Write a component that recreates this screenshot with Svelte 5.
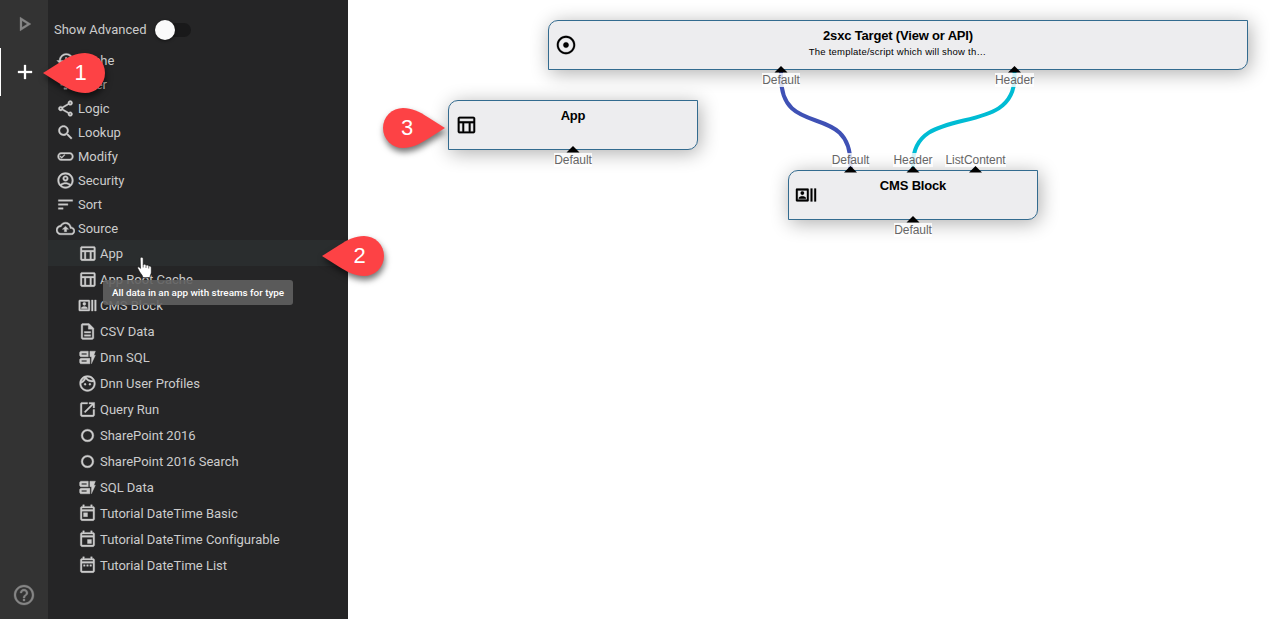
<script>
  const icons = {
    play: 'M10 8.64L15.27 12 10 15.36V8.64M8 5v14l11-7L8 5z',
    add: 'M19 13h-6v6h-2v-6H5v-2h6V5h2v6h6v2z',
    help: 'M11 18h2v-2h-2v2zm1-16C6.48 2 2 6.48 2 12s4.48 10 10 10 10-4.48 10-10S17.52 2 12 2zm0 18c-4.41 0-8-3.59-8-8s3.59-8 8-8 8 3.59 8 8-3.59 8-8 8zm0-14c-2.21 0-4 1.79-4 4h2c0-1.1.9-2 2-2s2 .9 2 2c0 2-3 1.75-3 5h2c0-2.25 3-2.5 3-5 0-2.21-1.79-4-4-4z',
    history: 'M13 3c-4.97 0-9 4.03-9 9H1l3.89 3.89.07.14L9 12H6c0-3.87 3.13-7 7-7s7 3.13 7 7-3.13 7-7 7c-1.93 0-3.68-.79-4.94-2.06l-1.42 1.42C8.27 19.99 10.51 21 13 21c4.97 0 9-4.03 9-9s-4.03-9-9-9zm-1 5v5l4.28 2.54.72-1.21-3.5-2.08V8H12z',
    filter: 'M10 18h4v-2h-4v2zM3 6v2h18V6H3zm3 7h12v-2H6v2z',
    share: 'M18 16.08c-.76 0-1.44.3-1.96.77L8.91 12.7c.05-.23.09-.46.09-.7s-.04-.47-.09-.7l7.05-4.11c.54.5 1.25.81 2.04.81 1.66 0 3-1.34 3-3s-1.34-3-3-3-3 1.34-3 3c0 .24.04.47.09.7L8.04 9.81C7.5 9.31 6.79 9 6 9c-1.66 0-3 1.34-3 3s1.34 3 3 3c.79 0 1.5-.31 2.04-.81l7.12 4.16c-.05.21-.08.43-.08.65 0 1.61 1.31 2.92 2.92 2.92s2.92-1.31 2.92-2.92-1.31-2.92-2.92-2.92zM18 4c.55 0 1 .45 1 1s-.45 1-1 1-1-.45-1-1 .45-1 1-1zM6 13c-.55 0-1-.45-1-1s.45-1 1-1 1 .45 1 1-.45 1-1 1zm12 7.02c-.55 0-1-.45-1-1s.45-1 1-1 1 .45 1 1-.45 1-1 1z',
    search: 'M15.5 14h-.79l-.28-.27C15.41 12.59 16 11.11 16 9.5 16 5.91 13.09 3 9.5 3S3 5.91 3 9.5 5.91 16 9.5 16c1.61 0 3.09-.59 4.23-1.57l.27.28v.79l5 4.99L20.49 19l-4.99-5zm-6 0C7.01 14 5 11.99 5 9.5S7.01 5 9.5 5 14 7.01 14 9.5 11.99 14 9.5 14z',
    modify: 'M17.5 7h-11C3.9 7 2 9.24 2 12s1.9 5 4.5 5h11c2.6 0 4.5-2.24 4.5-5s-1.9-5-4.5-5zm0 8.2h-11C5 15.2 3.9 13.8 3.9 12S5 8.8 6.5 8.8h11c1.5 0 2.6 1.4 2.6 3.2s-1.1 3.2-2.6 3.2zM7.24 14.46l-2.57-2.57.9-.9 1.67 1.67 3.3-3.3.9.9z',
    account: 'M12 2C6.48 2 2 6.48 2 12s4.48 10 10 10 10-4.48 10-10S17.52 2 12 2zM7.07 18.28c.43-.9 3.05-1.78 4.93-1.78s4.51.88 4.93 1.78C15.57 19.36 13.86 20 12 20s-3.57-.64-4.93-1.72zm11.29-1.45c-1.43-1.74-4.9-2.33-6.36-2.33s-4.93.59-6.36 2.33C4.62 15.49 4 13.82 4 12c0-4.41 3.59-8 8-8s8 3.59 8 8c0 1.82-.62 3.49-1.64 4.83zM12 6c-1.94 0-3.5 1.56-3.5 3.5S10.06 13 12 13s3.5-1.56 3.5-3.5S13.94 6 12 6zm0 5c-.83 0-1.5-.67-1.5-1.5S11.17 8 12 8s1.5.67 1.5 1.5S12.83 11 12 11z',
    sort: 'M3 18h6v-2H3v2zM3 6v2h18V6H3zm0 7h12v-2H3v2z',
    cloud: 'M19.35 10.04C18.67 6.59 15.64 4 12 4 9.11 4 6.6 5.64 5.35 8.04 2.34 8.36 0 10.91 0 14c0 3.31 2.69 6 6 6h13c2.76 0 5-2.24 5-5 0-2.64-2.05-4.78-4.65-4.96zM19 18H6c-2.21 0-4-1.79-4-4 0-2.05 1.53-3.76 3.56-3.97l1.07-.11.5-.95C8.08 7.14 9.94 6 12 6c2.62 0 4.88 1.86 5.39 4.43l.3 1.5 1.53.11c1.56.1 2.78 1.41 2.78 2.96 0 1.65-1.35 3-3 3zM8 13h2.55v3h2.9v-3H16l-4-4z',
    table: 'M20 3H5c-1.1 0-2 .9-2 2v14c0 1.1.9 2 2 2h15c1.1 0 2-.9 2-2V5c0-1.1-.9-2-2-2zm0 2v3H5V5h15zm-5 14h-5v-9h5v9zM5 10h3v9H5v-9zm12 9v-9h3v9h-3z',
    actors: 'M21 5h2v14h-2zM17 5h2v14h-2zM14 5H2c-.55 0-1 .45-1 1v12c0 .55.45 1 1 1h12c.55 0 1-.45 1-1V6c0-.55-.45-1-1-1zm-1 12H3V7h10v10zM8 7.99a1.95 1.95 0 1 0 0 3.9a1.95 1.95 0 1 0 0-3.9zM11.89 15.35c0-1.3-2.59-1.95-3.89-1.95s-3.89.65-3.89 1.95V16h7.78v-.65z',
    doc: 'M8 16h8v2H8zm0-4h8v2H8zm6-10H6c-1.1 0-2 .9-2 2v16c0 1.1.89 2 1.99 2H18c1.1 0 2-.9 2-2V8l-6-6zm4 18H6V4h7v5h5v11z',
    form: 'M17 20v-9h-2V4h7l-2 5h2l-5 11zM4 13h11v7H4c-1.1 0-2-.9-2-2v-3c0-1.1.9-2 2-2zm.5 2.5v2H11v-2zM13 4v7H4c-1.1 0-2-.9-2-2V6c0-1.1.9-2 2-2zM4.5 6.5v2H11v-2z',
    face: 'M10.25 13c0 .69-.56 1.25-1.25 1.25S7.75 13.69 7.75 13s.56-1.25 1.25-1.25 1.25.56 1.25 1.25zM15 11.75c-.69 0-1.25.56-1.25 1.25s.56 1.25 1.25 1.25 1.25-.56 1.25-1.25-.56-1.25-1.25-1.25zm7 .25c0 5.52-4.48 10-10 10S2 17.52 2 12 6.48 2 12 2s10 4.48 10 10zM10.66 4.12C12.06 6.44 14.6 8 17.5 8c.46 0 .91-.05 1.34-.12C17.44 5.56 14.9 4 12 4c-.46 0-.91.05-1.34.12zM4.42 9.47c1.71-.97 3.03-2.55 3.66-4.44C6.37 6 5.05 7.58 4.42 9.47zM20 12c0-.78-.12-1.53-.33-2.24-.7.15-1.42.24-2.17.24-3.13 0-5.92-1.44-7.76-3.69C8.69 8.87 6.6 10.88 4 11.86c.01.04 0 .09 0 .14 0 4.41 3.59 8 8 8s8-3.59 8-8z',
    launch: 'M19 19H5V5h7V3H5c-1.11 0-2 .9-2 2v14c0 1.1.89 2 2 2h14c1.1 0 2-.9 2-2v-7h-2v7zM14 3v2h3.59l-9.83 9.83 1.41 1.41L19 6.41V10h2V3h-7z',
    ring: 'M12 4a8 8 0 1 0 0 16a8 8 0 1 0 0-16zm0 2.2a5.8 5.8 0 1 1 0 11.6a5.8 5.8 0 1 1 0-11.6z',
    today: 'M19 3h-1V1h-2v2H8V1H6v2H5c-1.11 0-1.99.9-1.99 2L3 19c0 1.1.89 2 2 2h14c1.1 0 2-.9 2-2V5c0-1.1-.9-2-2-2zm0 16H5V9h14v10zm0-12H5V5h14v2zM7 11h5v5H7z',
    event: 'M19 3h-1V1h-2v2H8V1H6v2H5c-1.11 0-1.99.9-1.99 2L3 19c0 1.1.89 2 2 2h14c1.1 0 2-.9 2-2V5c0-1.1-.9-2-2-2zm0 16H5V9h14v10zm0-12H5V5h14v2zM12 12h5v5h-5z',
    range: 'M19 3h-1V1h-2v2H8V1H6v2H5c-1.11 0-1.99.9-1.99 2L3 19c0 1.1.89 2 2 2h14c1.1 0 2-.9 2-2V5c0-1.1-.9-2-2-2zm0 16H5V9h14v10zm0-12H5V5h14v2zM7 11h2v2H7zm4 0h2v2h-2zm4 0h2v2h-2z',
    target: 'M12 2C6.49 2 2 6.49 2 12s4.49 10 10 10 10-4.49 10-10S17.51 2 12 2zm0 18c-4.41 0-8-3.59-8-8s3.59-8 8-8 8 3.59 8 8-3.59 8-8 8zm3-8c0 1.66-1.34 3-3 3s-3-1.34-3-3 1.34-3 3-3 3 1.34 3 3z'
  };

  const groups = [
    ['history', 'Cache'], ['filter', 'Filter'], ['share', 'Logic'], ['search', 'Lookup'],
    ['modify', 'Modify'], ['account', 'Security'], ['sort', 'Sort'], ['cloud', 'Source']
  ];
  const sources = [
    ['table', 'App'], ['table', 'App Root Cache'], ['actors', 'CMS Block'], ['doc', 'CSV Data'],
    ['form', 'Dnn SQL'], ['face', 'Dnn User Profiles'], ['launch', 'Query Run'],
    ['ring', 'SharePoint 2016'], ['ring', 'SharePoint 2016 Search'], ['form', 'SQL Data'],
    ['today', 'Tutorial DateTime Basic'], ['event', 'Tutorial DateTime Configurable'], ['range', 'Tutorial DateTime List']
  ];

  const nodes = [
    { x: 200, y: 20, w: 700, icon: 'target', title: '2sxc Target (View or API)', note: 'The template/script which will show th…' },
    { x: 100, y: 100, w: 250, icon: 'table', title: 'App' },
    { x: 440, y: 170, w: 250, icon: 'actors', title: 'CMS Block' }
  ];
  const ports = [
    { x: 433, y: 70, label: 'Default' },
    { x: 666.5, y: 70, label: 'Header' },
    { x: 225, y: 150, label: 'Default' },
    { x: 502.5, y: 170, label: 'Default', up: true },
    { x: 565, y: 170, label: 'Header', up: true },
    { x: 627.5, y: 170, label: 'ListContent', up: true },
    { x: 565, y: 220, label: 'Default' }
  ];
  const callouts = [
    { x: 43, y: 53, n: 1 },
    { x: 322, y: 236, n: 2 },
    { x: 383, y: 108, n: 3, right: true }
  ];
</script>

{#snippet icon(name, size)}
  <svg class="icon" viewBox="0 0 24 24" width={size} height={size}><path fill-rule={name === 'form' || name === 'ring' ? 'evenodd' : 'nonzero'} d={icons[name]} /></svg>
{/snippet}

<div class="app">
  <nav class="rail">
    <div class="tab">{@render icon('play', 24)}</div>
    <div class="tab active">{@render icon('add', 24)}</div>
    <div class="tab last">{@render icon('help', 24)}</div>
  </nav>

  <aside class="panel">
    <div class="advanced">
      <span class="caption">Show Advanced</span>
      <span class="switch"><i></i></span>
    </div>
    {#each groups as [ic, label]}
      <div class="group"><span class="slot">{@render icon(ic, 19)}</span>{label}</div>
    {/each}
    {#each sources as [ic, label], i}
      <div class="source" class:hover={i === 0}><span class="slot">{@render icon(ic, 19)}</span>{label}</div>
    {/each}
  </aside>

  <main class="canvas">
    {#each nodes as n}
      <div class="node" style="left:{n.x}px;top:{n.y}px;width:{n.w}px">
        <span class="node-icon">{@render icon(n.icon, 22)}</span>
        <div class="title">{n.title}</div>
        {#if n.note}<div class="note">{n.note}</div>{/if}
      </div>
    {/each}
    <svg class="wires" width="930" height="619">
      <path d="M433 70V77C433 140 502.500 101 502.500 164V170" stroke="#3f51b5" />
      <path d="M666.500 70V77C666.500 140 565 101 565 164V170" stroke="#00bcd4" />
    </svg>
    {#each ports as p}
      <div class="port" class:up={p.up} style="left:{p.x}px;top:{p.y}px"><span>{p.label}</span></div>
    {/each}
    <svg class="wires" width="930" height="619">
      {#each ports as p}
        <path class="arrow" d="M{p.x - 6.5} {p.y + 2.5}L{p.x} {p.y - 4}L{p.x + 6.5} {p.y + 2.5}z" />
      {/each}
    </svg>
  </main>

  <div class="tooltip">All data in an app with streams for type</div>
  <svg class="cursor" width="16" height="23" viewBox="0 0 16 22">
    <path d="M3.200 2.200c0-2 3-2 3 0v6.100c.5-.9 2.600-.8 2.800.6.6-.7 2.500-.5 2.700.9.8-.6 2.600-.2 2.600 1.400v4.600c0 2-1.300 2.700-1.300 5.200H5.800c0-2.200-2-3.500-3.300-5.900L.8 12.100c-.7-1.400.9-2.400 1.900-1.200l.8 1z" />
    <path class="lines" d="M6.200 8v3M9 9v2.500M11.700 10v2" />
  </svg>

  {#each callouts as c}
    <div class="callout" class:right={c.right} style="left:{c.x}px;top:{c.y}px">
      <svg width="62" height="40" viewBox="0 0 62 40"><path d="M0 20L17 9.200C26 3.500 33 0 42 0A20 20 0 0 1 42 40C33 40 26 36.500 17 30.800Z" /></svg>
      <b>{c.n}</b>
    </div>
  {/each}
</div>

<style>
  :global(body) { margin: 0; overflow: hidden; }
  .app { position: relative; display: flex; width: 1278px; height: 619px; background: #fff; overflow: hidden; font-family: Roboto, sans-serif; }
  .icon { display: block; flex: none; fill: currentColor; }
  .rail { width: 48px; display: flex; flex-direction: column; background: #333; color: #858585; }
  .tab { height: 48px; display: flex; align-items: center; justify-content: center; box-sizing: border-box; }
  .tab .icon, .tab :global(.icon) { stroke: currentColor; stroke-width: .3; }
  .tab.active { padding-left: 1px; color: #fff; box-shadow: inset 1px 0 #fff; }
  .tab.last { margin-top: auto; }
  .panel { width: 300px; background: #252526; color: #ccc; font-size: 13px; letter-spacing: -.01px; }
  .panel :global(.icon) { stroke: currentColor; stroke-width: .45; }
  .advanced { height: 48px; padding-left: 6px; box-sizing: border-box; display: flex; gap: 10px; }
  .caption { height: 36px; margin-top: 12px; line-height: 36px; }
  .switch { position: relative; width: 35px; height: 14px; margin-top: 23px; border-radius: 7px; background: #19191a; }
  .switch i { position: absolute; left: -1px; top: -3px; width: 20px; height: 20px; border-radius: 50%; background: #fafafa; box-shadow: 0 1px 3px rgba(0,0,0,.5); }
  .group { height: 24px; display: flex; align-items: center; padding-left: 8px; }
  .source { height: 26px; display: flex; align-items: center; padding-left: 30px; }
  .source.hover { background: #2a2d2e; }
  .slot { width: 18px; margin-right: 4px; display: flex; justify-content: center; }
  .canvas { position: relative; flex: 1; font-family: "Liberation Sans", Arial, sans-serif; overflow: hidden; }
  .node { position: absolute; height: 50px; box-sizing: border-box; border: 1px solid #336b8f; border-radius: 10px 0; background: #ededef; box-shadow: 2px 3px 19px rgba(0,0,0,.32); text-align: center; color: #000; padding-top: 7px; }
  .node-icon { position: absolute; left: 6px; top: 13px; }
  .node-icon :global(.icon) { stroke: currentColor; stroke-width: .25; }
  .title { font-weight: bold; font-size: 13px; line-height: 16px; letter-spacing: -.18px; }
  .note { font-size: 9.5px; line-height: 12px; margin-top: 2px; letter-spacing: .23px; position: relative; left: -.5px; }
  .wires { position: absolute; left: 0; top: 0; fill: none; stroke-width: 4; }
  .wires .arrow { fill: #000; }
  .port { position: absolute; width: 0; display: flex; justify-content: center; font-size: 12px; line-height: 14px; color: #666; }
  .port span { background: rgba(255,255,255,.8); margin-top: 3px; height: 14px; white-space: nowrap; letter-spacing: -.04px; }
  .port.up span { margin-top: -17px; }
  .tooltip { position: absolute; left: 103px; top: 280px; width: 190px; height: 25px; box-sizing: border-box; border-radius: 3px; background: rgba(97,97,97,.9); color: #fff; font-size: 9.9px; font-weight: 500; line-height: 25px; text-align: center; white-space: nowrap; }
  .cursor { position: absolute; left: 137px; top: 256px; fill: #fff; stroke: #111; stroke-width: .6; }
  .cursor .lines { fill: none; stroke: #333; stroke-width: .7; }
  .callout { position: absolute; width: 62px; height: 40px; }
  .callout svg { display: block; overflow: visible; fill: #fd4245; filter: drop-shadow(1px 4px 3px rgba(0,0,0,.55)); }
  .callout.right path { transform: translateX(62px) scaleX(-1); }
  .callout b { position: absolute; left: 17.5px; top: 0; width: 40px; text-align: center; color: #fff; font: 400 22px/40px "Liberation Sans", Arial, sans-serif; }
  .callout.right b { left: 4px; }
</style>
